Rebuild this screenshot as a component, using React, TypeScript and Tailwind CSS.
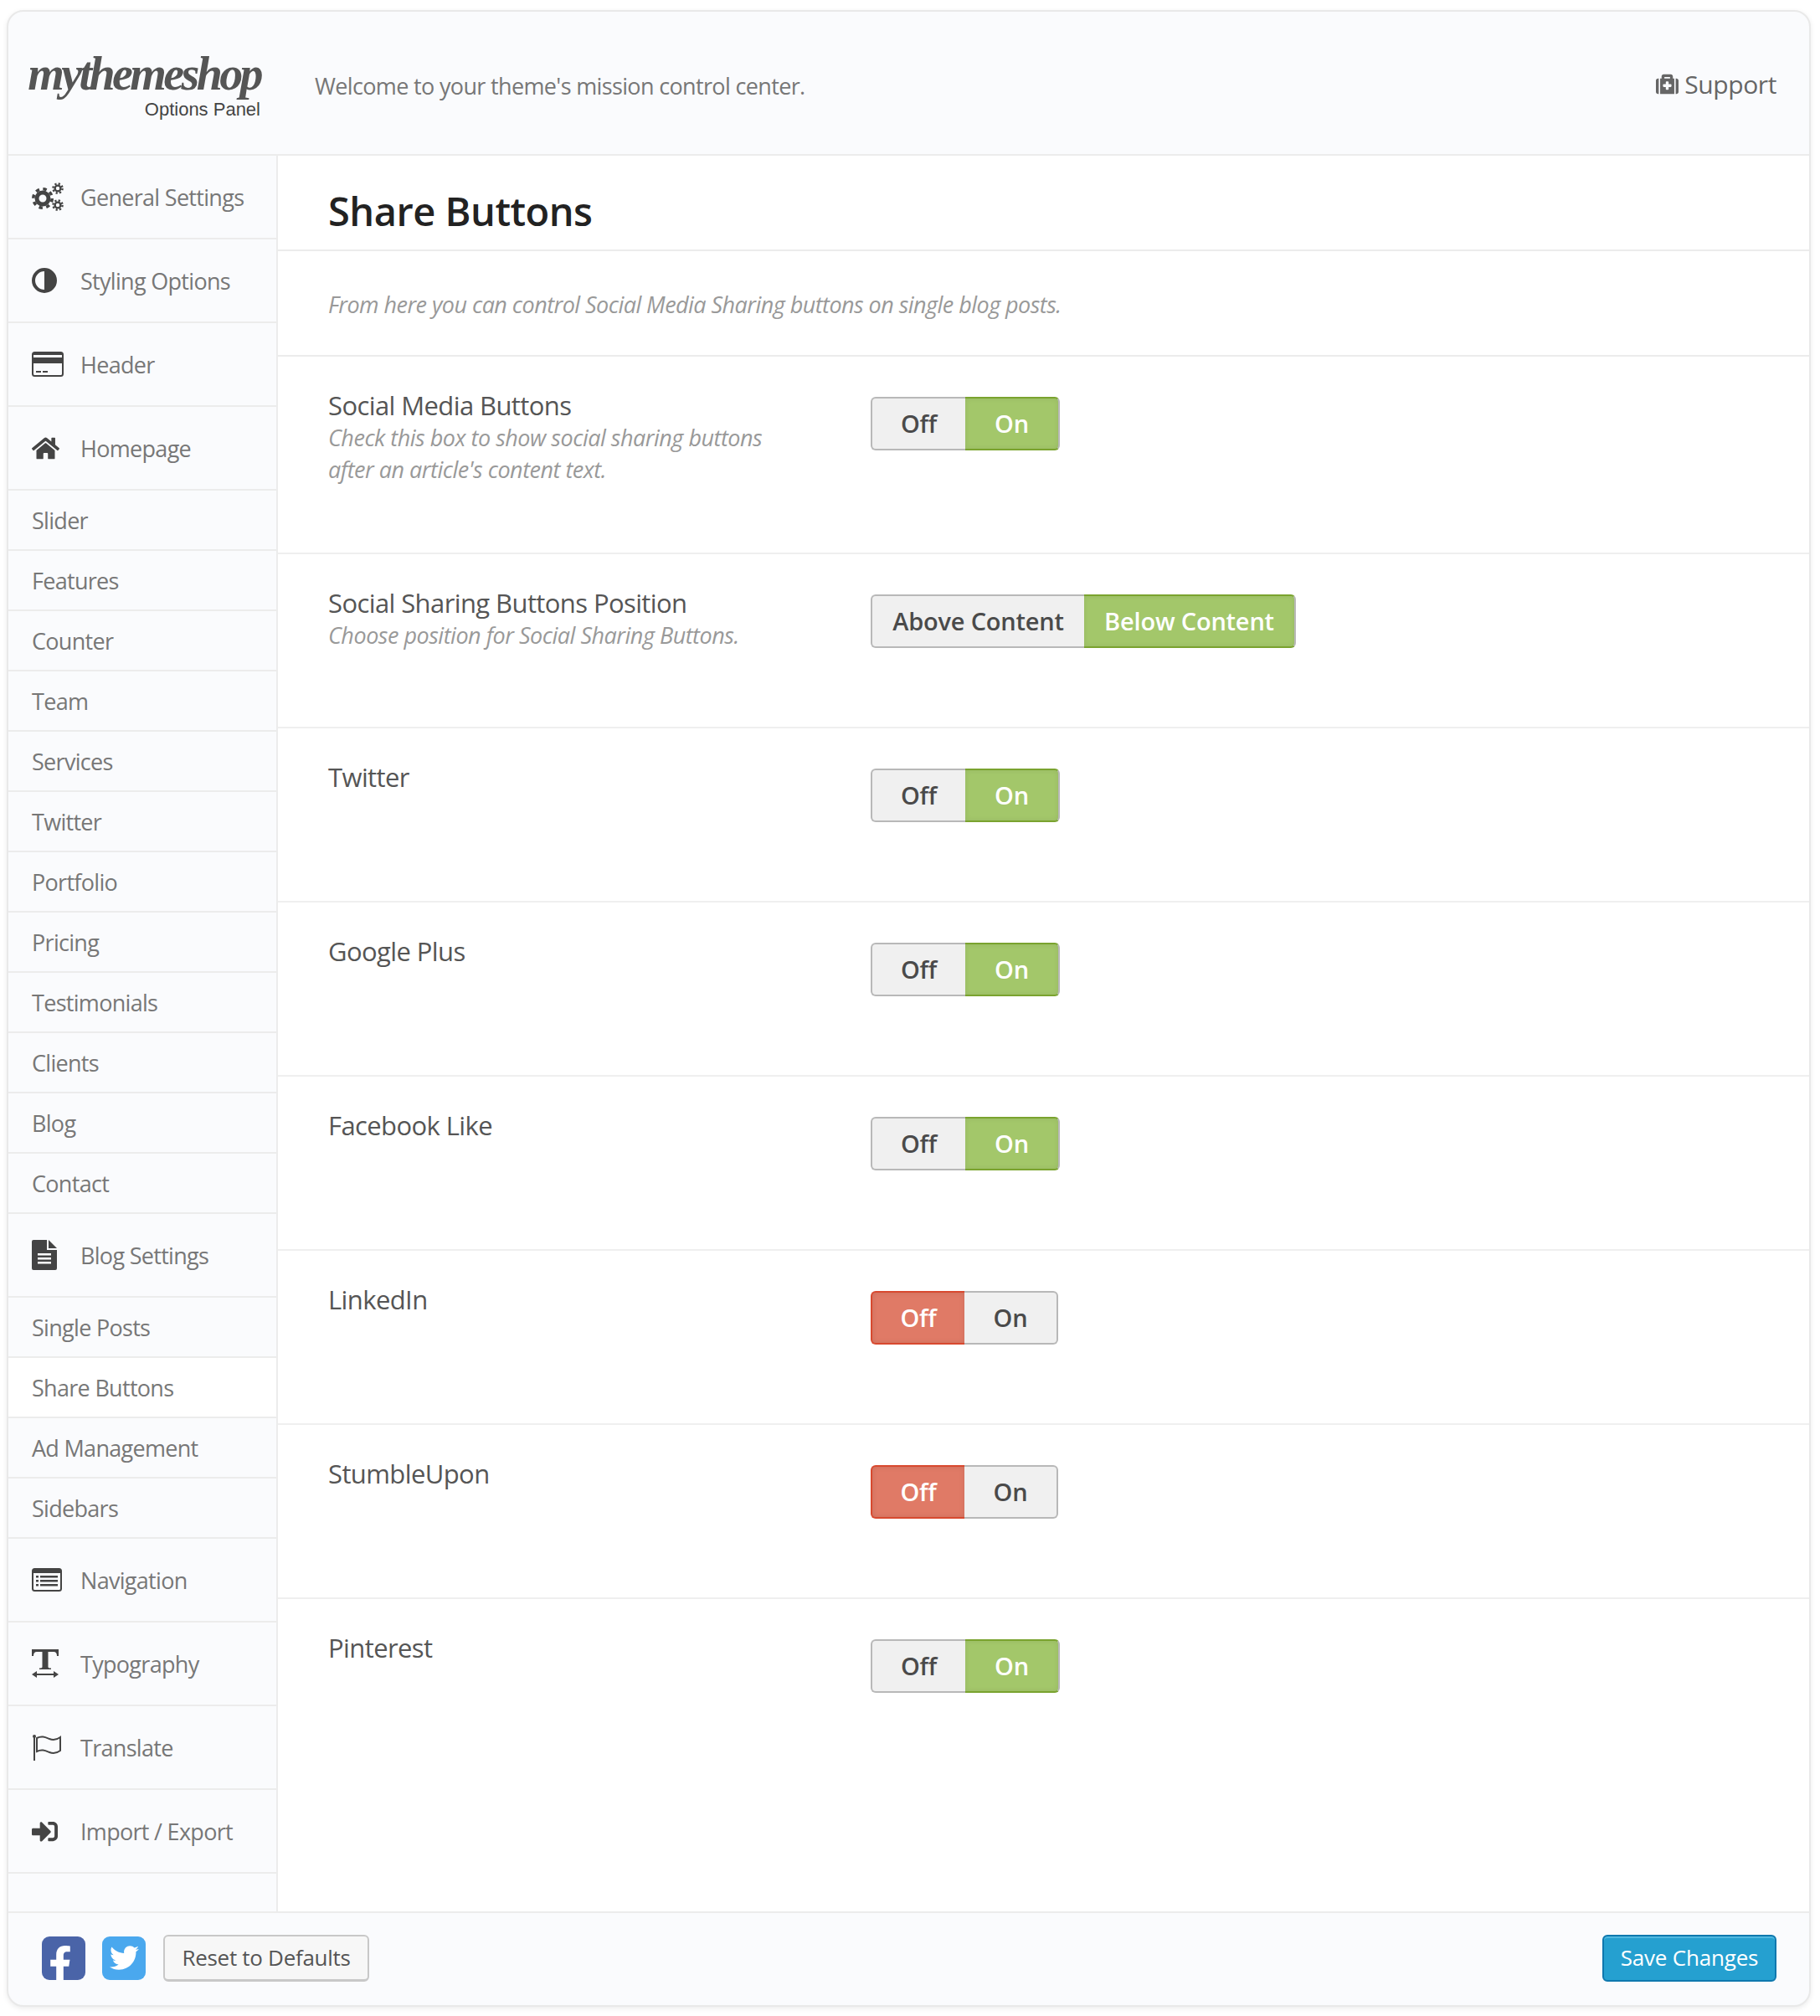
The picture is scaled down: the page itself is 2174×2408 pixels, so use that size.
import { FaFacebookF, FaHome, FaMedkit, FaSignInAlt, FaTwitter } from "react-icons/fa";
import React from 'react'

const CogsIcon = () => (
  <svg viewBox="0 0 38 34" className="w-[38px] h-[34px]">
    <circle cx="13" cy="19" r="7" fill="none" stroke="#444" strokeWidth="5" />
    <circle cx="13" cy="19" r="11.2" fill="none" stroke="#444" strokeWidth="3.6" strokeDasharray="4.4 4.4" />
    <circle cx="31" cy="7" r="3.4" fill="none" stroke="#444" strokeWidth="2.4" />
    <circle cx="31" cy="7" r="5.6" fill="none" stroke="#444" strokeWidth="2.4" strokeDasharray="2.2 2.2" />
    <circle cx="31" cy="27" r="3.4" fill="none" stroke="#444" strokeWidth="2.4" />
    <circle cx="31" cy="27" r="5.6" fill="none" stroke="#444" strokeWidth="2.4" strokeDasharray="2.2 2.2" />
  </svg>
)

const HalfIcon = () => (
  <svg viewBox="0 0 30 30" className="w-[30px] h-[30px]">
    <circle cx="15" cy="15" r="13" fill="none" stroke="#444" strokeWidth="4" />
    <path d="M15 2 A13 13 0 0 1 15 28 Z" fill="#444" />
  </svg>
)

const HeaderIcon = () => (
  <svg viewBox="0 0 38 30" className="w-[38px] h-[30px]">
    <rect x="1" y="1" width="36" height="28" rx="2.5" fill="none" stroke="#444" strokeWidth="2" />
    <rect x="1" y="7" width="36" height="7" fill="#444" />
    <rect x="1" y="1" width="36" height="3" fill="#444" />
    <rect x="5" y="23" width="6" height="2" fill="#444" />
    <rect x="13" y="23" width="6" height="2" fill="#444" />
  </svg>
)

const FileIcon = () => (
  <svg viewBox="0 0 30 36" className="w-[30px] h-[36px]">
    <path d="M2 0 H18 V12 H30 V34 Q30 36 28 36 H2 Q0 36 0 34 V2 Q0 0 2 0 Z" fill="#444" />
    <path d="M20 0 L30 10 H20 Z" fill="#444" />
    <rect x="7" y="16" width="16" height="2.5" fill="#fff" />
    <rect x="7" y="21" width="16" height="2.5" fill="#fff" />
    <rect x="7" y="26" width="16" height="2.5" fill="#fff" />
  </svg>
)

const NavIcon = () => (
  <svg viewBox="0 0 36 28" className="w-[36px] h-[28px]">
    <rect x="1" y="1" width="34" height="26" rx="2.5" fill="none" stroke="#444" strokeWidth="2" />
    <rect x="1" y="1" width="34" height="5" fill="#444" />
    <rect x="5" y="9" width="3" height="2.5" fill="#444" />
    <rect x="5" y="14" width="3" height="2.5" fill="#444" />
    <rect x="5" y="19" width="3" height="2.5" fill="#444" />
    <rect x="10" y="9" width="21" height="2.5" fill="#444" />
    <rect x="10" y="14" width="21" height="2.5" fill="#444" />
    <rect x="10" y="19" width="21" height="2.5" fill="#444" />
  </svg>
)

const TypeIcon = () => (
  <svg viewBox="0 0 32 34" className="w-[32px] h-[34px]">
    <path d="M0 0 H32 V8 H30 Q30 3 26 3 H19.5 V21 Q19.5 22.5 23 22.5 V24 H9 V22.5 Q12.5 22.5 12.5 21 V3 H6 Q2 3 2 8 H0 Z" fill="#444" />
    <rect x="3" y="29" width="26" height="2" fill="#444" />
    <path d="M0 30 L6 26 V34 Z M32 30 L26 26 V34 Z" fill="#444" />
  </svg>
)

const FlagIcon = () => (
  <svg viewBox="0 0 36 32" className="w-[36px] h-[32px]">
    <circle cx="3" cy="3" r="2" fill="#444" />
    <rect x="2" y="3" width="2" height="29" fill="#444" />
    <path d="M6 5 C12 2 16 4 21 6 C26 8 30 7 34 4 V20 C30 23 26 24 21 22 C16 20 12 18 6 21 Z" fill="none" stroke="#444" strokeWidth="2" />
  </svg>
)

type Item = { label: string; icon?: React.ReactNode; active?: boolean }

const gray = "#444"
const items: Item[] = [
  { label: "General Settings", icon: <CogsIcon /> },
  { label: "Styling Options", icon: <HalfIcon /> },
  { label: "Header", icon: <HeaderIcon /> },
  { label: "Homepage", icon: <FaHome size={33} color={gray} /> },
  { label: "Slider" },
  { label: "Features" },
  { label: "Counter" },
  { label: "Team" },
  { label: "Services" },
  { label: "Twitter" },
  { label: "Portfolio" },
  { label: "Pricing" },
  { label: "Testimonials" },
  { label: "Clients" },
  { label: "Blog" },
  { label: "Contact" },
  { label: "Blog Settings", icon: <FileIcon /> },
  { label: "Single Posts" },
  { label: "Share Buttons", active: true },
  { label: "Ad Management" },
  { label: "Sidebars" },
  { label: "Navigation", icon: <NavIcon /> },
  { label: "Typography", icon: <TypeIcon /> },
  { label: "Translate", icon: <FlagIcon /> },
  { label: "Import / Export", icon: <FaSignInAlt size={31} color={gray} /> },
]

const SideItem = ({ item }: { item: Item }) => {
  if (item.icon) {
    return (
      <div className="h-[100px] flex items-center border-b-2 border-[#ececec] pl-[28px] text-[27px] tracking-[-0.7px] text-[#777]">
        <span className="w-[58px] flex items-center shrink-0">{item.icon}</span>
        <span className="pt-[2px]">{item.label}</span>
      </div>
    )
  }
  return (
    <div className={`h-[72px] flex items-center border-b-2 border-[#ececec] pl-[28px] pt-[2px] text-[27px] tracking-[-0.7px] text-[#777] ${item.active ? "bg-white" : ""}`}>
      {item.label}
    </div>
  )
}

const Toggle = ({ left, right, value, leftW, rightW }: { left: string; right: string; value: "left" | "right"; leftW?: string; rightW?: string }) => {
  const plain = "bg-[#f0f0f0] border-2 border-[#b8b8b8] text-[#4a4a4a]"
  const lw = leftW ?? (value === "left" ? "w-[112px]" : "w-[113px]")
  const rw = rightW ?? (value === "left" ? "w-[112px]" : "w-[113px]")
  return (
    <div className="flex h-[64px] text-[29px] font-semibold tracking-[-0.2px]">
      <div className={`${lw} flex items-center justify-center rounded-l-[6px] ${value === "left" ? "bg-[#e07a66] border-y-2 border-l-2 border-[#d8492f] text-white shadow-[inset_0_0_6px_rgba(0,0,0,0.1)]" : `${plain} border-r-0`}`}>
        {left}
      </div>
      <div className={`${rw} flex items-center justify-center rounded-r-[6px] ${value === "right" ? "bg-[#a3c76a] border-y-2 border-[#7aa32f] border-r-2 border-r-[#b8b8b8] text-white shadow-[inset_0_0_6px_rgba(0,0,0,0.08)]" : `${plain} border-l-0`}`}>
        {right}
      </div>
    </div>
  )
}

const Row = ({ title, desc, height = "h-[208px]", children }: { title: string; desc?: string[]; height?: string; children: React.ReactNode }) => (
  <div className={`${height} flex border-b-2 border-[#efefef] pl-[60px] pt-[48px]`}>
    <div className="w-[648px] shrink-0 -mt-[10px]">
      <div className="text-[31px] leading-[40px] tracking-[-0.6px] text-[#555]">{title}</div>
      {desc?.map((d) => (
        <div key={d} className="text-[27px] leading-[38px] italic tracking-[-0.5px] text-[#999]">{d}</div>
      ))}
    </div>
    {children}
  </div>
)

const App = () => {
  return (
    <div className="w-[2174px] h-[2408px] bg-white pt-[12px] pl-[8px] font-['Open_Sans',sans-serif]">
      <div className="w-[2155px] h-[2385px] flex flex-col rounded-[20px] border-2 border-[#e9e9e9] bg-[#fafbfd] shadow-[0_2px_6px_rgba(0,0,0,0.08)] overflow-hidden">
        <div className="h-[172px] shrink-0 flex items-center border-b-2 border-[#ececec] pl-[25px] pr-[39px]">
          <div className="w-[276px] mr-[65px] pt-[8px] flex flex-col items-end">
            <div className="text-[56px] leading-[50px] font-bold italic tracking-[-3.6px] text-[#555] font-['Liberation_Serif',serif]">mythemeshop</div>
            <div className="mt-[6px] text-[22px] leading-[24px] text-[#444] font-['Liberation_Sans',sans-serif]">Options Panel</div>
          </div>
          <div className="pt-[8px] text-[27px] tracking-[-0.65px] text-[#777]">Welcome to your theme's mission control center.</div>
          <div className="ml-auto pt-[3px] flex items-center gap-[7px] text-[30px] tracking-[-0.4px] text-[#666]">
            <FaMedkit size={27} color="#666" />
            Support
          </div>
        </div>
        <div className="flex-1 flex min-h-0">
          <div className="w-[322px] shrink-0 border-r-2 border-[#ececec]">
            {items.map((item) => (
              <SideItem key={item.label} item={item} />
            ))}
          </div>
          <div className="flex-1 bg-white">
            <div className="h-[114px] flex items-center border-b-2 border-[#ececec] pl-[60px] pt-[20px]">
              <h1 className="text-[47px] font-semibold tracking-[-0.5px] text-[#222]">Share Buttons</h1>
            </div>
            <div className="h-[126px] flex items-center border-b-2 border-[#ececec] pl-[60px] pt-[5px] text-[27px] italic tracking-[-0.55px] text-[#999]">
              From here you can control Social Media Sharing buttons on single blog posts.
            </div>
            <Row title="Social Media Buttons" height="h-[236px]" desc={["Check this box to show social sharing buttons", "after an article's content text."]}>
              <Toggle left="Off" right="On" value="right" />
            </Row>
            <Row title="Social Sharing Buttons Position" desc={["Choose position for Social Sharing Buttons."]}>
              <Toggle left="Above Content" right="Below Content" value="right" leftW="w-[255px]" rightW="w-[253px]" />
            </Row>
            <Row title="Twitter"><Toggle left="Off" right="On" value="right" /></Row>
            <Row title="Google Plus"><Toggle left="Off" right="On" value="right" /></Row>
            <Row title="Facebook Like"><Toggle left="Off" right="On" value="right" /></Row>
            <Row title="LinkedIn"><Toggle left="Off" right="On" value="left" /></Row>
            <Row title="StumbleUpon"><Toggle left="Off" right="On" value="left" /></Row>
            <div className="flex pl-[60px] pt-[48px]">
              <div className="w-[648px] shrink-0 -mt-[10px] text-[31px] leading-[40px] tracking-[-0.6px] text-[#555]">Pinterest</div>
              <Toggle left="Off" right="On" value="right" />
            </div>
          </div>
        </div>
        <div className="h-[112px] shrink-0 flex items-center border-t-2 border-[#ececec] pl-[40px] pr-[39px] pb-[3px]">
          <div className="w-[52px] h-[52px] rounded-[9px] bg-[#4a64a8] flex items-end justify-end pr-[8px] overflow-hidden">
            <FaFacebookF size={44} color="#fff" className="-mb-[3px]" />
          </div>
          <div className="w-[52px] h-[52px] rounded-[9px] bg-[#4aa8ee] flex items-center justify-center ml-[20px]">
            <FaTwitter size={35} color="#fff" />
          </div>
          <div className="ml-[21px] w-[246px] h-[56px] flex items-center justify-center rounded-[6px] border-2 border-b-[3px] border-[#c8c8c8] bg-[#f7f7f7] text-[26px] tracking-[-0.3px] text-[#555]">
            Reset to Defaults
          </div>
          <div className="ml-auto w-[208px] h-[56px] flex items-center justify-center rounded-[6px] border-2 border-[#0f78ae] bg-[#25a0d0] text-[26px] tracking-[-0.2px] text-white shadow-[inset_0_2px_0_#4fb8e0]">
            Save Changes
          </div>
        </div>
      </div>
    </div>
  )
}

export default App
